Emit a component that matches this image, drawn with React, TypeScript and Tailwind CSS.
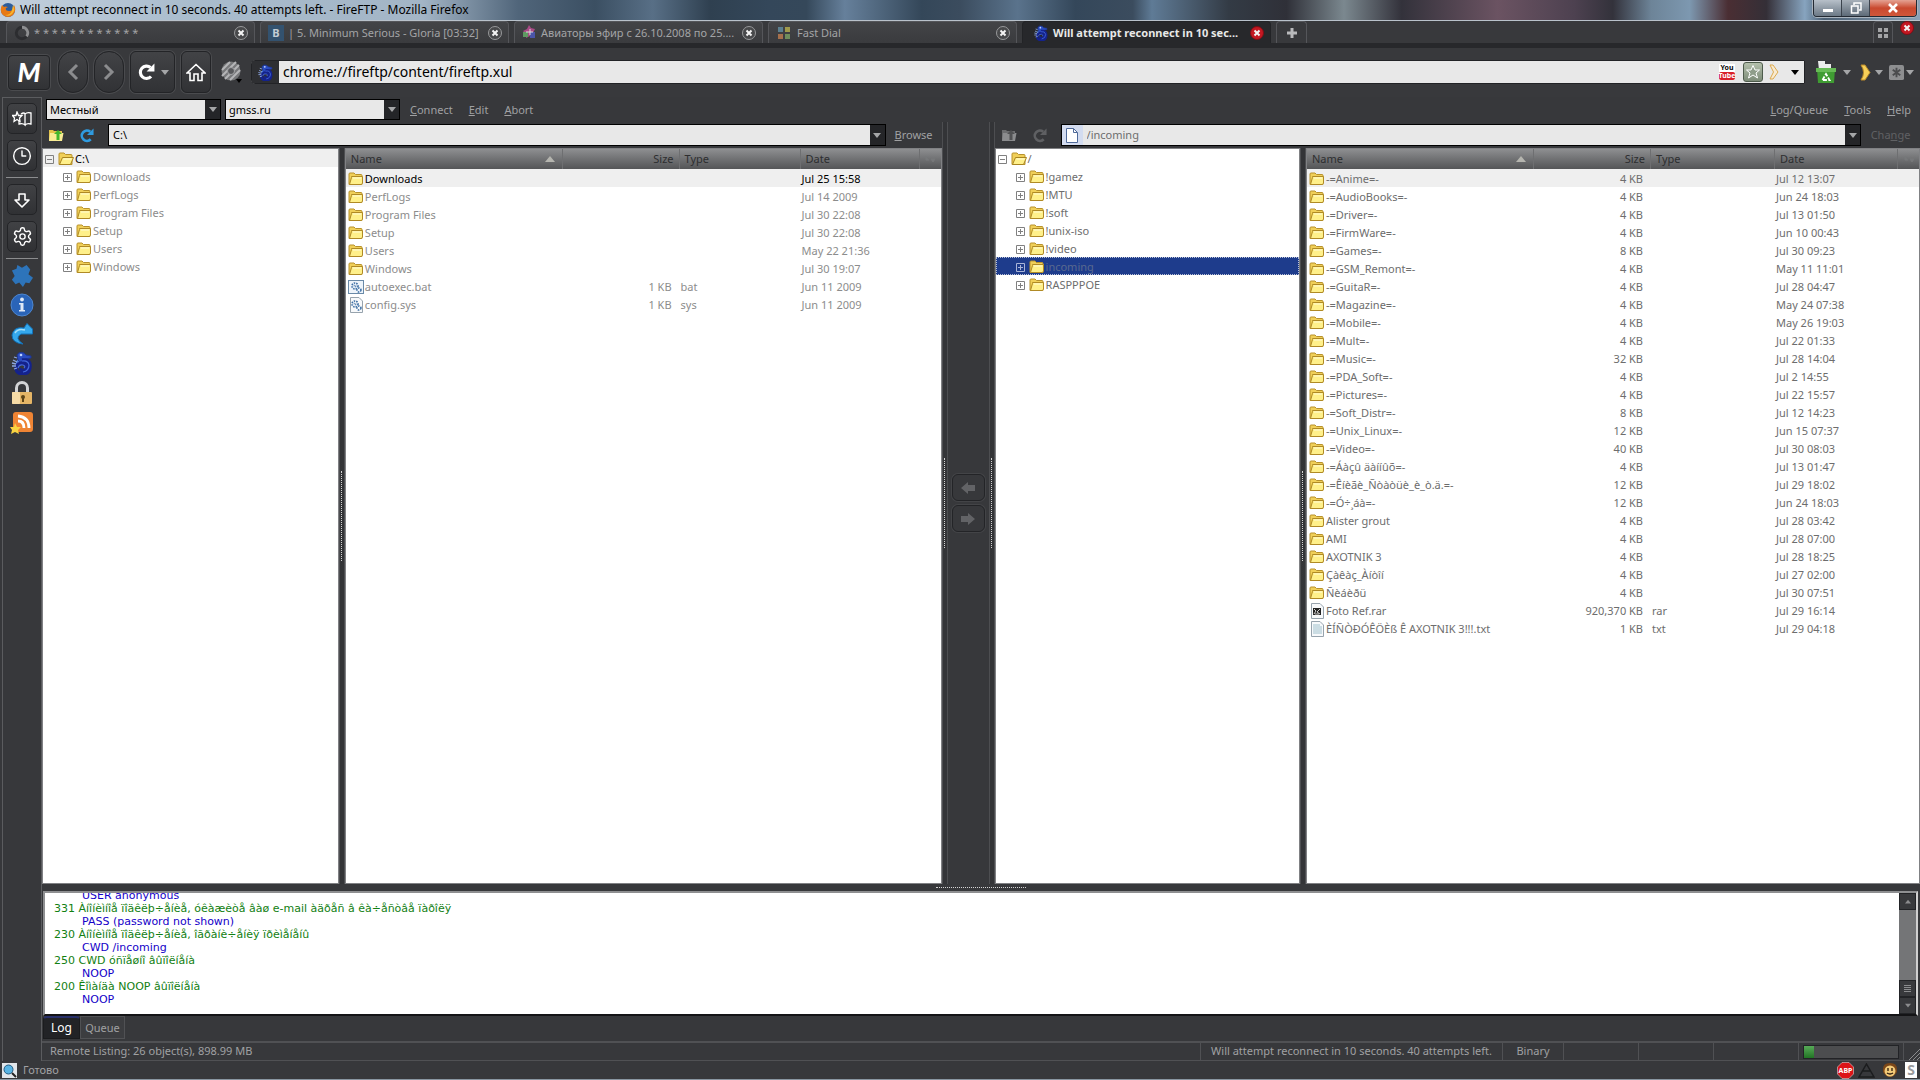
import React from "react";
import { LuArrowBigDown, LuClock3, LuSettings } from "react-icons/lu";

type Row = { name: string; size?: string; type?: string; date: string; icon?: string };

const localFiles: Row[] = [
  { name: "Downloads", date: "Jul 25 15:58" },
  { name: "PerfLogs", date: "Jul 14 2009" },
  { name: "Program Files", date: "Jul 30 22:08" },
  { name: "Setup", date: "Jul 30 22:08" },
  { name: "Users", date: "May 22 21:36" },
  { name: "Windows", date: "Jul 30 19:07" },
  { name: "autoexec.bat", size: "1 KB", type: "bat", date: "Jun 11 2009", icon: "bat" },
  { name: "config.sys", size: "1 KB", type: "sys", date: "Jun 11 2009", icon: "sys" },
];

const remoteFiles: Row[] = [
  { name: "-=Anime=-", size: "4 KB", date: "Jul 12 13:07" },
  { name: "-=AudioBooks=-", size: "4 KB", date: "Jun 24 18:03" },
  { name: "-=Driver=-", size: "4 KB", date: "Jul 13 01:50" },
  { name: "-=FirmWare=-", size: "4 KB", date: "Jun 10 00:43" },
  { name: "-=Games=-", size: "8 KB", date: "Jul 30 09:23" },
  { name: "-=GSM_Remont=-", size: "4 KB", date: "May 11 11:01" },
  { name: "-=GuitaR=-", size: "4 KB", date: "Jul 28 04:47" },
  { name: "-=Magazine=-", size: "4 KB", date: "May 24 07:38" },
  { name: "-=Mobile=-", size: "4 KB", date: "May 26 19:03" },
  { name: "-=Mult=-", size: "4 KB", date: "Jul 22 01:33" },
  { name: "-=Music=-", size: "32 KB", date: "Jul 28 14:04" },
  { name: "-=PDA_Soft=-", size: "4 KB", date: "Jul 2 14:55" },
  { name: "-=Pictures=-", size: "4 KB", date: "Jul 22 15:57" },
  { name: "-=Soft_Distr=-", size: "8 KB", date: "Jul 12 14:23" },
  { name: "-=Unix_Linux=-", size: "12 KB", date: "Jun 15 07:37" },
  { name: "-=Video=-", size: "40 KB", date: "Jul 30 08:03" },
  { name: "-=Áàçû äàííûõ=-", size: "4 KB", date: "Jul 13 01:47" },
  { name: "-=Êíèãè_Ñòàòüè_è_ò.ä.=-", size: "12 KB", date: "Jul 29 18:02" },
  { name: "-=Ó÷¸áà=-", size: "12 KB", date: "Jun 24 18:03" },
  { name: "Alister grout", size: "4 KB", date: "Jul 28 03:42" },
  { name: "AMI", size: "4 KB", date: "Jul 28 07:00" },
  { name: "AXOTNIK 3", size: "4 KB", date: "Jul 28 18:25" },
  { name: "Çàêàç_Àíòîí", size: "4 KB", date: "Jul 27 02:00" },
  { name: "Ñèáèðü", size: "4 KB", date: "Jul 30 07:51" },
  { name: "Foto Ref.rar", size: "920,370 KB", type: "rar", date: "Jul 29 16:14", icon: "rar" },
  { name: "ÈÍÑÒÐÓÊÖÈß Ê AXOTNIK 3!!!.txt", size: "1 KB", type: "txt", date: "Jul 29 04:18", icon: "txt" },
];

const log = [
  { cmd: true, text: "USER anonymous" },
  { text: "331 Àíîíèìíîå ïîäêëþ÷åíèå, óêàæèòå âàø e-mail àäðåñ â êà÷åñòâå ïàðîëÿ" },
  { cmd: true, text: "PASS (password not shown)" },
  { text: "230 Àíîíèìíîå ïîäêëþ÷åíèå, îãðàíè÷åíèÿ ïðèìåíåíû" },
  { cmd: true, text: "CWD /incoming" },
  { text: "250 CWD óñïåøíî âûïîëíåíà" },
  { cmd: true, text: "NOOP" },
  { text: "200 Êîìàíäà NOOP âûïîëíåíà" },
  { cmd: true, text: "NOOP" },
];

function Folder({ open }: { open?: boolean }) {
  return (
    <svg className="shrink-0" width="16" height="14" viewBox="0 0 16 14">
      <path d="M1 12.5V2q0-1 1-1h4l1.5 1.5H13q1 0 1 1V12.500z" fill="#f0cf58" stroke="#b8922c" />
      {open ? (
        <path d="M1.500 12.500L4.500 5.500H15.500L12.500 12.500z" fill="#fff08a" stroke="#a88420" />
      ) : (
        <path d="M1.500 12.500L3.500 5.500V4.500H14.500V11L13.500 12.500z" fill="#fff08a" stroke="#b08a25" />
      )}
      <path d={open ? "M5.500 7H13.500" : "M5 6H13"} stroke="#fffbd8" />
    </svg>
  );
}

function FileIcon({ kind }: { kind: string }) {
  return (
    <svg className="shrink-0" width="16" height="16" viewBox="0 0 16 16">
      {kind === "bat" ? (
        <rect x="0.500" y="1.500" width="15" height="13" fill="#eef4fa" stroke="#6a8aa8" />
      ) : (
        <path d="M2.500 0.500H11L14.500 4V15.500H2.500z" fill="#f7f9fb" stroke="#97a3ad" />
      )}
      {(kind === "bat" || kind === "sys") && (
        <g fill="none" stroke="#3b6ea5" strokeDasharray="1.500 1">
          <circle cx="7" cy="7" r="3" strokeWidth="1.600" />
          <circle cx="7" cy="7" r="1" />
          <circle cx="11" cy="11" r="2" strokeWidth="1.500" />
        </g>
      )}
      {kind === "rar" && (
        <>
          <rect x="4" y="5" width="8" height="7" fill="#222" />
          <path d="M5 6l2 2-2 3M11 6L8 9l3 2M6 11h4" fill="none" stroke="#ccc" />
        </>
      )}
      {kind === "txt" && (
        <path d="M4 4H11M4 6H13M4 8H13M4 10H13M4 12H13" stroke="#9fc0cc" />
      )}
    </svg>
  );
}

function Seahorse({ size }: { size: number }) {
  return (
    <svg width={size} height={size} viewBox="0 0 24 24" className="shrink-0">
      <path d="M8 8q-3 3-2 6l3-1 3-4z" fill="#4a78dd" />
      <path d="M7 4Q9 0 14 2l2 2 5 1v2l-6 1q-3 1-2 3-4 1-5-2z" fill="#2a4cc0" stroke="#1d3590" />
      <path d="M12 9Q20 8 20 15q0 8-8 8-6-1-6-6 1-5 7-5 4 1 4 4t-4 4q-3-1-2-3" fill="none" stroke="#14228c" strokeWidth="3.500" />
      <path d="M12 10Q18 9 19 14q0 6-6 7M8 17q1-4 5-3 3 1 1 3" fill="none" stroke="#4368dc" strokeWidth="1.200" />
      <circle cx="11" cy="4" r="1.300" fill="#bcd0ff" />
      <path d="M3 9l4 2M2 12l4 1M2 15l4 0M4 18l3-1M4 6l3 1" stroke="#8ca6e0" strokeWidth="1.300" />
    </svg>
  );
}

function Reload({ size, color }: { size: number; color: string }) {
  return (
    <svg width={size} height={size} viewBox="0 0 16 16" className="shrink-0">
      <path d="M12.500 12A5.500 5.500 0 1 1 12 4" fill="none" stroke={color} strokeWidth="2.800" />
      <path d="M15.500 0.500V7.500H8.500z" fill={color} />
    </svg>
  );
}

function FolderUp({ dim }: { dim?: boolean }) {
  return (
    <svg width="16" height="16" viewBox="0 0 16 16" className="shrink-0">
      <path d="M1 14V3h4l1 1h8v10z" fill={dim ? "#6d6e70" : "#e3c24a"} />
      <path d="M1 14L2 6H15.500L14 14z" fill={dim ? "#8b8c8e" : "#f8ec94"} />
      <path d="M10 3l4 4h-2.500v6h-3V7H6z" fill={dim ? "#505153" : "#42b62e"} />
    </svg>
  );
}

function Caret({ className = "text-[#a5a6a8]" }: { className?: string }) {
  return (
    <svg width="8" height="5" viewBox="0 0 8 5" className={className}>
      <path d="M0 0H8L4 5z" fill="currentColor" />
    </svg>
  );
}

function CloseDot({ red }: { red?: boolean }) {
  return (
    <svg width="14" height="14" viewBox="0 0 14 14">
      <circle cx="7" cy="7" r="6.500" fill={red ? "#c41822" : "#48494b"} stroke={red ? "#7d0f16" : "#98999b"} />
      <path d="M4.500 4.500L9.500 9.500M9.500 4.500L4.500 9.500" stroke="#f4f4f4" strokeWidth="2" />
    </svg>
  );
}

function TitleBar() {
  return (
    <header className="flex h-5 shrink-0 items-start bg-[linear-gradient(90deg,#c3d0dd_0%,#a9bccd_10%,#a3b5c6_22%,#50657a_27%,#3b4f62_31%,#586f86_34%,#2f4050_37%,#34475a_40%,#35485a_42%,#66809b_44%,#344759_48%,#3b4c5e_50%,#5a738c_53%,#34475a_56%,#3b4c5e_59%,#5f7b96_60%,#333b45_64%,#2f3038_67%,#7b888f_70%,#33323b_73%,#6b5362_78%,#4d4150_82%,#33323b_84%,#6d8498_86%,#7d98b0_88%,#4a2e33_90%,#342f37_92%,#87a4bf_94%,#4b5f73_95%,#8ba3b8_100%)]">
      <div className="flex h-5 flex-1 items-center gap-1">
        <svg width="16" height="16" viewBox="0 0 16 16">
          <circle cx="8" cy="8" r="7" fill="#2c5d9c" />
          <path d="M2 3q-3 6 1 10q5 4 10 0q4-5 1-10q0 6-5 6q-4 0-3-3l2-1q-3-1-4 0z" fill="#e87a16" />
          <path d="M13 3q3 5-1 9q-3 3-7 1q6 0 7-5z" fill="#f8b62e" />
        </svg>
        <h1 className="text-xs text-black">
          Will attempt reconnect in 10 seconds. 40 attempts left. - FireFTP - Mozilla Firefox
        </h1>
      </div>
      <div className="mr-[3px] flex h-[17px] overflow-hidden rounded-b border border-t-0 border-[#232a33] ring-1 ring-[#aab4be]">
        <button aria-label="Minimize" className="flex w-7 items-end justify-center border-r border-[#3b434d] bg-linear-to-b from-[#b7c0c9] to-[#6c7986] pb-1">
          <span className="h-[3px] w-[10px] bg-white" />
        </button>
        <button aria-label="Restore" className="flex w-7 items-center justify-center border-r border-[#3b434d] bg-linear-to-b from-[#a7b0b9] to-[#5e6b78]">
          <svg width="12" height="12" viewBox="0 0 12 12" fill="none" stroke="#fff" strokeWidth="1.500">
            <path d="M4 3V1H11V8H9" />
            <rect x="1.500" y="4" width="6.500" height="7" />
          </svg>
        </button>
        <button aria-label="Close" className="flex w-[46px] items-center justify-center bg-linear-to-b from-[#e4a293] via-[#c9492f] to-[#d0573a]">
          <svg width="12" height="10" viewBox="0 0 12 10">
            <path d="M2 1L10 9M10 1L2 9" stroke="#fff" strokeWidth="2.600" />
          </svg>
        </button>
      </div>
    </header>
  );
}

function Tab({ icon, title, active }: { icon: React.ReactNode; title: string; active?: boolean }) {
  return (
    <div
      className={
        active
          ? "flex h-[22px] w-[249px] items-center gap-1 rounded-t border border-b-0 border-[#222326] bg-[#27282b] pr-[6px] pl-[10px] font-bold text-[#e8e8e8]"
          : "flex h-[22px] w-[249px] items-center gap-1 rounded-t border border-b-0 border-[#55565a] bg-linear-to-b from-[#434447] to-[#3a3b3e] pr-[6px] pl-[7px] text-[#a3a4a6]"
      }
    >
      {icon}
      <button className="min-w-0 flex-1 text-left whitespace-nowrap">{title}</button>
      <button aria-label="Close tab">
        <CloseDot red={active} />
      </button>
    </div>
  );
}

function Tabs() {
  return (
    <nav className="flex h-[28px] shrink-0 items-start gap-[5px] border-t border-b-[5px] border-t-[#b9c2cb] border-b-[#27282b] bg-[#38393c] px-[6px] text-[11px]">
      <Tab
        title="* * * * * * * * * * * *"
        icon={
          <svg width="16" height="16" viewBox="0 0 14 14" fill="none" strokeWidth="2.500">
            <circle cx="7" cy="7" r="5" stroke="#2c2d30" />
            <path d="M7 2A5 5 0 0 1 11 10" stroke="#8d8e90" />
          </svg>
        }
      />
      <Tab
        title="| 5. Minimum Serious - Gloria [03:32]"
        icon={<span className="flex size-4 items-center justify-center bg-[#33526f] font-bold text-[#c3ccd4]">B</span>}
      />
      <Tab
        title="Авиаторы эфир с 26.10.2008 по 25...."
        icon={
          <svg width="15" height="15" viewBox="0 0 15 15">
            <path d="M7 0l2 3 4 1-2 4 1 5-4-2-4 2V9L1 6l4-2z" fill="#a94a86" />
            <path d="M1 7h5v5H1z" fill="#5f9a62" />
            <path d="M8 7h5v6H8z" fill="#4a55a8" />
            <path d="M8 4v6M4 7h7" stroke="#ddd" />
          </svg>
        }
      />
      <Tab
        title="Fast Dial"
        icon={
          <span className="mr-[3px] ml-[2px] grid grid-cols-2 gap-[2px]">
            <i className="size-[5px] bg-[#5b8090]" />
            <i className="size-[5px] bg-[#a09a4c]" />
            <i className="size-[5px] bg-[#a5704c]" />
            <i className="size-[5px] bg-[#6f8e5c]" />
          </span>
        }
      />
      <Tab active title="Will attempt reconnect in 10 sec..." icon={<Seahorse size={16} />} />
      <button aria-label="New tab" className="flex h-[22px] w-[31px] items-center justify-center rounded-t border border-b-0 border-[#55565a]">
        <svg width="10" height="10" viewBox="0 0 10 10">
          <path d="M5 0V10M0 5H10" stroke="#b9babc" strokeWidth="3" />
        </svg>
      </button>
      <button aria-label="All tabs" className="ml-auto flex h-[22px] w-5 items-center justify-center rounded-t border border-b-0 border-[#55565a]">
        <svg width="10" height="10" viewBox="0 0 10 10" fill="#a3a4a6">
          <path d="M0 0h4v4H0zM6 0h4v4H6zM0 6h4v4H0zM6 6h4v4H6z" />
        </svg>
      </button>
      <button aria-label="Close" className="ml-[2px]">
        <CloseDot red />
      </button>
    </nav>
  );
}

const navButton = "flex shrink-0 items-center justify-center border border-[#232427] bg-linear-to-b from-[#424346] to-[#313235] ring-1 ring-[#4a4b4e]";

function NavBar() {
  return (
    <div className="flex h-[49px] shrink-0 items-center gap-[6px] bg-[#38393c] px-[6px] pb-px">
      <button className={`${navButton} ml-[2px] h-[35px] w-[42px] rounded`}>
        <span className="font-['Lato'] text-[26px] leading-none font-black text-white italic">M</span>
      </button>
      <button aria-label="Back" className={`${navButton} ml-[2px] h-[42px] w-[30px] rounded-full`}>
        <svg width="12" height="18" viewBox="0 0 12 18">
          <path d="M10 2L3 9L10 16" fill="none" stroke="#8b8c8e" strokeWidth="3" />
        </svg>
      </button>
      <button aria-label="Forward" className={`${navButton} h-[42px] w-[30px] rounded-full`}>
        <svg width="12" height="18" viewBox="0 0 12 18">
          <path d="M2 2L9 9L2 16" fill="none" stroke="#8b8c8e" strokeWidth="3" />
        </svg>
      </button>
      <button aria-label="Reload" className={`${navButton} h-[42px] w-[45px] gap-[6px] rounded-md`}>
        <Reload size={18} color="#fff" />
        <Caret />
      </button>
      <button aria-label="Home" className={`${navButton} h-[42px] w-[30px] rounded-md`}>
        <svg width="20" height="19" viewBox="0 0 20 19" fill="none" stroke="#fff" strokeWidth="1.600">
          <path d="M1 10L10 1.500L19 10H16V17.500H12V11H8V17.500H4V10z" />
        </svg>
      </button>
      <svg className="ml-1 shrink-0" width="22" height="22" viewBox="0 0 22 22">
        <circle cx="10" cy="10" r="9.500" fill="#77787a" />
        <path d="M1 9L9 1M1 15L15 1M4 18L18 4M9 19L19 9" stroke="#b4b5b7" strokeWidth="2" />
        <circle cx="10" cy="10" r="3.500" fill="#58595c" stroke="#a5a6a8" />
        <path d="M15 18h6l-3 4z" fill="#000" />
      </svg>
      <div className="ml-[2px] flex h-[24px] flex-1 items-center rounded-l border border-[#222326] bg-[#e8e8e8]">
        <span className="flex h-full w-[27px] items-center justify-center bg-[#2e2f32]">
          <Seahorse size={17} />
        </span>
        <input aria-label="Location" defaultValue="chrome://fireftp/content/fireftp.xul" className="min-w-0 flex-1 bg-transparent px-1 text-sm text-black outline-none" />
        <span className="flex w-4 flex-col items-center bg-white text-[7px] leading-[8px] font-bold text-black">
          You
          <span className="rounded-[2px] bg-[#d8202a] text-white">Tube</span>
        </span>
        <button aria-label="Bookmark" className="ml-2 flex size-5 items-center justify-center rounded-[3px] border border-[#4e5c4c] bg-linear-to-b from-[#b4c0ac] to-[#7d8c78]">
          <svg width="16" height="16" viewBox="0 0 16 16">
            <path d="M8 1.500L10 6H14.500L11 9L12.500 14L8 11L3.500 14L5 9L1.500 6H6z" fill="#8f9d8a" stroke="#fff" />
          </svg>
        </button>
        <svg className="ml-[6px]" width="10" height="16" viewBox="0 0 10 16">
          <path d="M1 1H4L9 8L4 15H1L4.500 8z" fill="#f8ead0" stroke="#dba94e" />
        </svg>
        <button aria-label="History" className="mr-[5px] ml-[12px]">
          <Caret className="text-black" />
        </button>
      </div>
      <button aria-label="Clean up" className="ml-1 flex items-center gap-[6px]">
        <svg width="22" height="24" viewBox="0 0 22 24">
          <path d="M3 1h7v3h6v6H4z" fill="#eceeec" />
          <path d="M2 9H20L19 23H3z" fill="#3f9c32" />
          <path d="M1 8H21V12H1z" fill="#66bb55" />
          <path d="M7.500 20l3.500-6 3.500 6z" fill="none" stroke="#fff" strokeWidth="1.800" strokeDasharray="4 1.500" />
        </svg>
        <Caret />
      </button>
      <button aria-label="Go" className="ml-[3px] flex items-center gap-1">
        <svg width="11" height="17" viewBox="0 0 11 17">
          <path d="M1 1H5L10 8.500L5 16H1Q6 8.500 1 1z" fill="#f7cf58" stroke="#b98a28" />
        </svg>
        <Caret />
      </button>
      <button aria-label="Options" className="flex items-center gap-[2px]">
        <svg width="15" height="15" viewBox="0 0 16 16">
          <rect width="16" height="16" rx="2" fill="#8d8e90" />
          <path d="M8 3V13M4 5L12 11M12 5L4 11" stroke="#4b4c4e" strokeWidth="2" />
        </svg>
        <Caret />
      </button>
    </div>
  );
}

const sideButton = "flex h-[31px] w-[30px] shrink-0 items-center justify-center rounded-[5px] border border-[#232427] bg-linear-to-b from-[#414245] to-[#303134] text-white";

function SideBar() {
  return (
    <aside className="ml-[2px] flex w-10 shrink-0 flex-col items-center gap-[6px] border-t border-r border-l border-[#5b5c5f] pt-[5px]">
      <button aria-label="Bookmarks" className={sideButton}>
        <svg width="20" height="16" viewBox="0 0 20 16" fill="none" stroke="#fff" strokeWidth="1.300">
          <path d="M9 3Q12 1 13 3V14Q11 12 7 13V10M13 3Q15 1 19 2V13Q15 12 13 14" />
          <path d="M5 1L6.500 4.500H10L7.500 7L8 10.500L5 8.500L2 10.500L2.500 7L0.500 4.500H4z" />
        </svg>
      </button>
      <button aria-label="History" className={sideButton}>
        <LuClock3 size={20} strokeWidth={1.7} />
      </button>
      <hr className="w-8 border-[#8b8c8e]" />
      <button aria-label="Downloads" className={sideButton}>
        <LuArrowBigDown size={24} strokeWidth={1.6} />
      </button>
      <button aria-label="Add-ons" className={sideButton}>
        <LuSettings size={21} strokeWidth={1.6} />
      </button>
      <hr className="w-8 border-[#8b8c8e]" />
      <div className="flex flex-col items-center gap-[6px]">
        <button aria-label="Extension">
          <svg width="24" height="22" viewBox="0 0 24 24">
            <path d="M7 0l5 3 5-3 4 5-2 5 5 4-4 6-4-1-3 5-4-5-4 2-4-5 3-4-3-6 5-2z" fill="#2d74ba" />
          </svg>
        </button>
        <button aria-label="Info">
          <svg width="24" height="24" viewBox="0 0 24 24">
            <circle cx="12" cy="12" r="11" fill="#2a64b8" stroke="#4d86cf" />
            <path d="M9 10h4.500v7H15v1.500H9V17h1.500v-5.500H9z" fill="#dfe8f5" />
            <circle cx="12" cy="6.500" r="1.900" fill="#dfe8f5" />
          </svg>
        </button>
        <button aria-label="Redo">
          <svg width="24" height="22" viewBox="0 0 24 22">
            <path d="M13 21Q2 20 2 12Q4 3 14 5L17 0.500L22.500 6V11H11Q4 15 13 21z" fill="#35a8ec" stroke="#1272ba" />
            <path d="M5 10Q8 5 15 7" fill="none" stroke="#a5def8" strokeWidth="1.500" />
          </svg>
        </button>
        <button aria-label="FireFTP">
          <Seahorse size={24} />
        </button>
        <button aria-label="Lock">
          <svg width="22" height="24" viewBox="0 0 22 24">
            <path d="M5.500 12V7a5.500 5.500 0 0 1 11 0V12" fill="none" stroke="#d3d4d6" strokeWidth="3" />
            <rect x="1" y="11" width="20" height="12" rx="1" fill="#e5b566" />
            <rect x="1" y="11" width="8" height="12" rx="1" fill="#f6dba6" />
            <circle cx="12" cy="16" r="2" fill="#5d4417" />
            <path d="M11 16h2v5h-2z" fill="#5d4417" />
          </svg>
        </button>
        <button aria-label="Feeds">
          <svg width="24" height="24" viewBox="0 0 24 24">
            <rect x="3" y="1" width="20" height="20" rx="3" fill="#ef8434" />
            <path d="M8 5Q19 6 19 17M8 10Q14 10 14 17" fill="none" stroke="#fff" strokeWidth="2.800" />
            <path d="M5 12l2 4 4 0-3 3 1 4-4-2-4 2 1-4-2-3h4z" fill="#f9d442" />
          </svg>
        </button>
      </div>
    </aside>
  );
}

function Account({ label, value, className }: { label: string; value: string; className: string }) {
  return (
    <div className={`${className} flex h-[21px] items-center border border-black bg-[#242528]`}>
      <select aria-label={label} className="h-full flex-1 appearance-none bg-[#e8e8e8] px-[3px] text-[11px] text-black outline-none">
        <option>{value}</option>
      </select>
      <span className="flex w-[15px] justify-center">
        <Caret />
      </span>
    </div>
  );
}

function PathBar({ remote }: { remote?: boolean }) {
  return (
    <div className="flex h-[26px] shrink-0 items-center pl-[6px]">
      <button aria-label="Parent folder">
        <FolderUp dim={remote} />
      </button>
      <button aria-label="Refresh" className="mr-[14px] ml-[15px]">
        <Reload size={15} color={remote ? "#5f6063" : "#2f9be0"} />
      </button>
      <div className="flex h-[22px] flex-1 items-center border border-black bg-[#e8e8e8]">
        {remote && (
          <span className="flex h-full w-[21px] items-center justify-center bg-[#d3dcf0]">
            <svg width="12" height="15" viewBox="0 0 12 15">
              <path d="M0.500 0.500H7.500L11.500 4.500V14.500H0.500z" fill="#fff" stroke="#506a9a" />
              <path d="M7.500 0.500V4.500H11.500" fill="none" stroke="#506a9a" />
            </svg>
          </span>
        )}
        <input
          aria-label={remote ? "Remote path" : "Local path"}
          defaultValue={remote ? "/incoming" : "C:\\"}
          className={remote ? "min-w-0 flex-1 px-1 text-[11px] text-[#6d6d6d] outline-none" : "min-w-0 flex-1 px-1 text-[11px] text-black outline-none"}
        />
        <button aria-label="Recent paths" className="flex h-full w-[15px] items-center justify-center bg-[#242528]">
          <Caret />
        </button>
      </div>
      <button className={remote ? "w-[59px] text-[#606164]" : "w-[56px] text-[#a0a1a3]"}>
        {remote ? <>Cha<u>n</u>ge</> : <><u>B</u>rowse</>}
      </button>
    </div>
  );
}

function Expander({ open, light }: { open?: boolean; light?: boolean }) {
  return (
    <svg width="9" height="9" viewBox="0 0 9 9" className="shrink-0">
      <path d={open ? "M0.500 0.500h8v8h-8zM2 4.500h5" : "M0.500 0.500h8v8h-8zM2 4.500h5M4.500 2v5"} fill="none" stroke={light ? "#a9b4d8" : "#808080"} />
    </svg>
  );
}

function Tree({ root, items, remote }: { root: string; items: string[]; remote?: boolean }) {
  return (
    <ul className={`w-[33%] shrink-0 border border-[#808184] bg-white ${remote ? "text-[#6d6d6d]" : "text-[#8c8c8c]"}`}>
      <li className={`flex h-[18px] items-center pt-[2px] pl-[2px] ${remote ? "" : "bg-[#efefef] text-black"}`}>
        <Expander open />
        <span className="ml-1 flex items-center gap-px">
          <Folder open />
          {root}
        </span>
      </li>
      {items.map((name) => (
        <li
          key={name}
          className={`flex h-[18px] items-center pt-[2px] pl-5 ${name === "incoming" ? "bg-[#1e3c8c] text-[#59698f] outline-1 -outline-offset-1 outline-dotted outline-[#b9c0d6]" : ""}`}
        >
          <Expander light={name === "incoming"} />
          <span className="ml-1 flex items-center gap-px">
            <Folder />
            {name}
          </span>
        </li>
      ))}
    </ul>
  );
}

function FileTable({ rows, remote }: { rows: Row[]; remote?: boolean }) {
  const th = "h-5 border-r border-[#6e6f71] p-0 px-[5px] text-left font-normal";
  return (
    <div className="min-w-0 flex-1 border border-[#808184] bg-white">
      <table className={`w-full table-fixed border-separate border-spacing-0 ${remote ? "text-[#6d6d6d]" : "text-[#8c8c8c]"}`}>
        <thead className="bg-linear-to-b from-[#8e8f91] to-[#545557] text-[#2d2e30]">
          <tr>
            <th className={th}>
              <span className="flex items-center justify-between pr-[2px]">
                Name
                <svg width="10" height="6" viewBox="0 0 10 6">
                  <path d="M0 6L5 0L10 6z" fill="#b5b5af" />
                </svg>
              </span>
            </th>
            <th className={`${th} w-[117px]`}>
              <span className="block text-right">Size</span>
            </th>
            <th className={`${th} ${remote ? "w-[124px]" : "w-[121px]"}`}>Type</th>
            <th className={`${th} ${remote ? "w-[123px]" : "w-[119px]"}`}>Date</th>
            <th aria-label="Columns" className="w-[21px] p-0">
              <svg className="mx-auto" width="10" height="6" viewBox="0 0 10 6">
                <path d="M1 0v4h3M6 3h4L8 6z" fill="#77787a" stroke="#77787a" />
              </svg>
            </th>
          </tr>
        </thead>
        <tbody>
          {rows.map((row, i) => (
            <tr key={row.name} className={i === 0 ? (remote ? "bg-[#efefef]" : "bg-[#efefef] text-black") : ""}>
              <td className="p-0 pl-[2px]">
                <span className="flex h-[18px] items-center gap-px pt-[2px] whitespace-nowrap">
                  {row.icon ? <FileIcon kind={row.icon} /> : <Folder />}
                  {row.name}
                </span>
              </td>
              <td className="p-0 pt-[2px] pr-2 text-right">{row.size}</td>
              <td className="p-0 pt-[2px] pl-px">{row.type}</td>
              <td className="p-0 pt-[2px] pl-px">{row.date}</td>
              <td className="p-0" />
            </tr>
          ))}
        </tbody>
      </table>
    </div>
  );
}

function Splitter() {
  return (
    <div className="flex w-[6px] shrink-0 flex-col items-center justify-center border-x border-[#4d4e51] bg-[#333437]">
      <span className="h-[90px] border-l border-dotted border-[#d5d5d5]" />
    </div>
  );
}

function Pane({ remote }: { remote?: boolean }) {
  return (
    <section className={remote ? "flex min-w-0 flex-1 flex-col" : "flex w-[47.9%] shrink-0 flex-col"}>
      <PathBar remote={remote} />
      <div className="flex min-h-0 flex-1">
        <Tree
          remote={remote}
          root={remote ? "/" : "C:\\"}
          items={
            remote
              ? ["!gamez", "!MTU", "!soft", "!unix-iso", "!video", "incoming", "RASPPPOE"]
              : ["Downloads", "PerfLogs", "Program Files", "Setup", "Users", "Windows"]
          }
        />
        <Splitter />
        <FileTable rows={remote ? remoteFiles : localFiles} remote={remote} />
      </div>
    </section>
  );
}

const swapButton = "flex h-[27px] w-[33px] items-center justify-center rounded-md border border-[#232427] bg-[#37383b] ring-1 ring-[#434447]";

function Transfer() {
  return (
    <div className="flex w-[53px] shrink-0">
      <Splitter />
      <div className="flex flex-1 flex-col items-center justify-center gap-1">
        <button aria-label="Download" className={swapButton}>
          <svg width="14" height="12" viewBox="0 0 14 12">
            <path d="M0 6L7 0V3H14V9H7V12z" fill="#626366" />
          </svg>
        </button>
        <button aria-label="Upload" className={swapButton}>
          <svg width="14" height="12" viewBox="0 0 14 12">
            <path d="M14 6L7 0V3H0V9H7V12z" fill="#626366" />
          </svg>
        </button>
      </div>
      <Splitter />
    </div>
  );
}

function Log() {
  return (
    <div className="mr-[2px] ml-px flex h-[125px] shrink-0 border-2 border-t-[#8e8f91] border-r-[#d0d0d0] border-b-[#141416] border-l-[#8e8f91] bg-white">
      <div className="flex flex-1 flex-col justify-end overflow-hidden pb-2 pl-[9px] font-['DejaVu_Sans','Liberation_Sans',sans-serif] text-[11px] leading-[13px]">
        {log.map((line, i) => (
          <p key={i} className={line.cmd ? "pl-7 text-[#1400c8]" : "text-[#128012]"}>
            {line.text}
          </p>
        ))}
      </div>
      <div className="flex w-[17px] flex-col bg-[#747577]">
        <button aria-label="Scroll up" className="flex h-[17px] items-center justify-center border border-[#222326] bg-[#38393c]">
          <Caret className="w-[6px] rotate-180 text-[#8b8c8e]" />
        </button>
        <span className="mt-auto flex h-[17px] flex-col items-center justify-center gap-px border border-[#222326] bg-[#38393c]">
          <i className="h-px w-[7px] bg-[#8b8c8e]" />
          <i className="h-px w-[7px] bg-[#8b8c8e]" />
          <i className="h-px w-[7px] bg-[#8b8c8e]" />
          <i className="h-px w-[7px] bg-[#8b8c8e]" />
        </span>
        <button aria-label="Scroll down" className="flex h-[17px] items-center justify-center border border-[#222326] bg-[#38393c]">
          <Caret className="w-[6px] text-[#8b8c8e]" />
        </button>
      </div>
    </div>
  );
}

function StatusBars() {
  return (
    <div className="flex h-[20px] shrink-0 items-stretch border-t-2 border-b border-t-[#505154] border-b-[#505154] text-[#a0a1a3]">
      <span className="flex flex-1 items-center pb-px pl-2">Remote Listing: 26 object(s), 898.99 MB</span>
      <span className="flex w-[302px] items-center justify-center border-l border-[#505154] pb-px">
        Will attempt reconnect in 10 seconds. 40 attempts left.
      </span>
      <span className="flex w-[61px] items-center justify-center border-l border-[#505154] pb-px">Binary</span>
      <span className="w-[75px] border-l border-[#505154]" />
      <span className="w-[75px] border-l border-[#505154]" />
      <span className="w-[85px] border-l border-[#505154]" />
      <span className="flex w-[105px] items-center border-l border-[#505154] px-1">
        <span className="h-[14px] w-full border border-[#222326] bg-[#4c4d4f]">
          <i className="block h-full w-[10px] bg-linear-to-b from-[#57ab58] to-[#217524]" />
        </span>
      </span>
      <span className="flex w-[17px] items-end justify-end border-l border-[#505154]">
        <svg width="12" height="12" viewBox="0 0 12 12">
          <path d="M1 12L12 1M5 12L12 5M9 12L12 9" stroke="#8b8c8e" />
        </svg>
      </span>
    </div>
  );
}

function App() {
  return (
    <div className="flex h-screen flex-col overflow-hidden bg-[#37383b] font-['Noto_Sans','Open_Sans',sans-serif] text-[11px] leading-4">
      <TitleBar />
      <Tabs />
      <NavBar />
      <div className="flex min-h-0 flex-1">
        <SideBar />
        <main className="flex min-w-0 flex-1 flex-col">
          <div className="flex h-[25px] shrink-0 items-center gap-1 pr-[9px] pl-1 text-[#a0a1a3]">
            <Account label="Category" value="Местный" className="w-[175px]" />
            <Account label="Account" value="gmss.ru" className="w-[175px]" />
            <button className="ml-[6px]"><u>C</u>onnect</button>
            <button className="ml-3"><u>E</u>dit</button>
            <button className="ml-3"><u>A</u>bort</button>
            <button className="ml-auto"><u>L</u>og/Queue</button>
            <button className="ml-3"><u>T</u>ools</button>
            <button className="ml-3"><u>H</u>elp</button>
          </div>
          <div className="flex min-h-0 flex-1">
            <Pane />
            <Transfer />
            <Pane remote />
          </div>
          <div className="flex h-[7px] shrink-0 items-center justify-center">
            <span className="w-[90px] border-t border-dotted border-[#d5d5d5]" />
          </div>
          <Log />
          <div className="flex h-[25px] shrink-0 items-start">
            <button className="ml-px h-[23px] w-[37px] rounded-t border border-t-2 border-[#1b1c1e] border-t-[#28306a] bg-[#222326] text-xs text-white">Log</button>
            <button className="h-[23px] w-[45px] border border-[#505154] bg-[#3c3d40] text-[#a0a1a3]">Queue</button>
          </div>
          <StatusBars />
        </main>
      </div>
      <footer className="flex h-[19px] shrink-0 items-center border-b border-[#8996a1] text-[#a0a1a3]">
        <svg className="mr-[6px] ml-[2px]" width="15" height="15" viewBox="0 0 15 15">
          <rect width="15" height="15" fill="#e2e6ea" />
          <circle cx="6.500" cy="6.500" r="4.500" fill="#58b4e4" stroke="#235a80" />
          <path d="M10 10L14 14" stroke="#222" strokeWidth="2" />
        </svg>
        Готово
        <span className="ml-auto flex items-center gap-1">
          <svg width="17" height="17" viewBox="0 0 17 17">
            <path d="M5 0.500H12L16.500 5V12L12 16.500H5L0.500 12V5z" fill="#dd1418" stroke="#eee" strokeWidth="0.500" />
            <text x="8.500" y="11" fontSize="7" fontWeight="bold" fill="#fff" textAnchor="middle">ABP</text>
          </svg>
          <svg width="17" height="15" viewBox="0 0 17 15">
            <path d="M8.500 1L16 14H1zM5 8H12" fill="none" stroke="#1b1c1e" strokeWidth="1.500" />
          </svg>
          <svg className="mx-[3px]" width="16" height="16" viewBox="0 0 16 16">
            <path d="M1 7Q1 1 8 1T15 7V10Q12 15 8 15T1 10z" fill="#7c4718" />
            <ellipse cx="8" cy="9" rx="5.500" ry="5.500" fill="#f2c978" />
            <path d="M6 6v3M10 6v3M5 11q3 2 6 0" fill="none" stroke="#2a1a0c" strokeWidth="1.300" />
          </svg>
          <span className="mr-[3px] flex h-4 w-3 items-center justify-center bg-white text-sm font-bold text-[#9b9c9e]">S</span>
        </span>
      </footer>
    </div>
  );
}

export default App;
